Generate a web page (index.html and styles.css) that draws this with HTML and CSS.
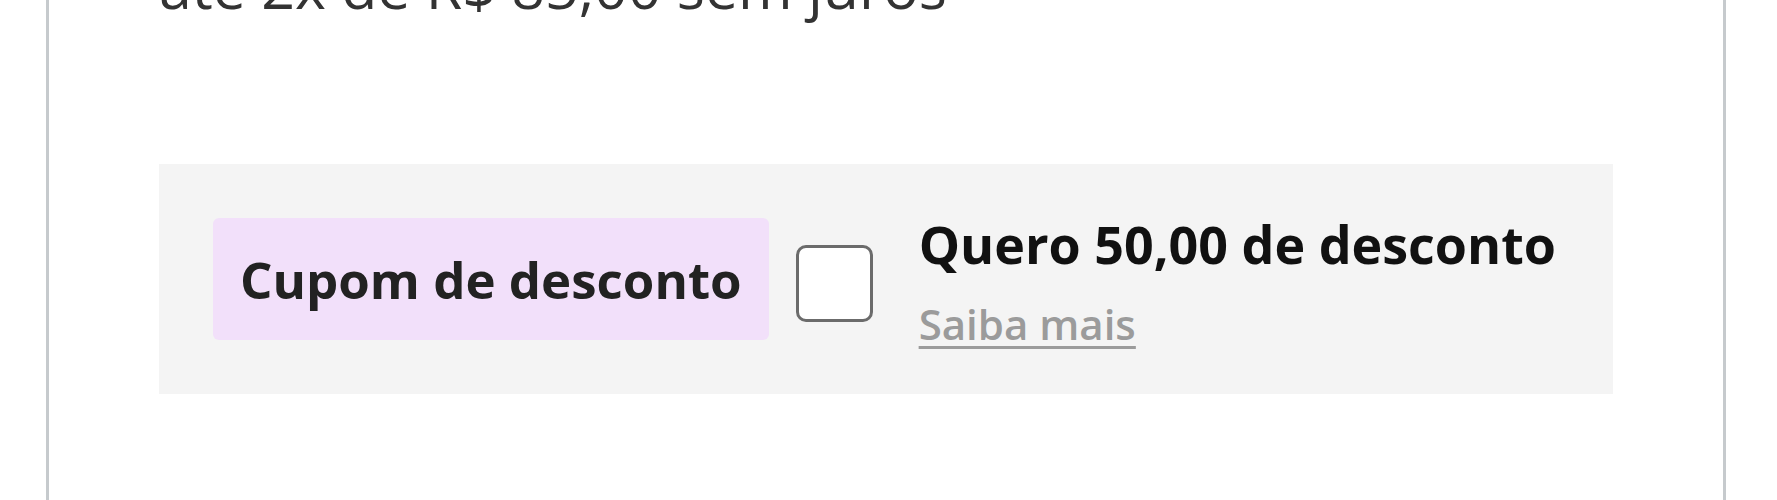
FILE: index.html
```html
<!DOCTYPE html>
<html lang="pt-BR">
<head>
  <meta charset="UTF-8">
  <meta name="viewport" content="width=device-width, initial-scale=1.0">
  <title>Cupom de desconto</title>
  <link rel="stylesheet" href="styles.css">
</head>
<body>
  <div class="card">
    <p class="installments">até 2x de R$ 85,00 sem juros</p>

    <div class="coupon">
      <span class="coupon-tag">Cupom de desconto</span>
      <label class="coupon-check">
        <input type="checkbox" id="coupon">
        <span class="box"></span>
      </label>
      <div class="coupon-text">
        <label for="coupon" class="coupon-title">Quero 50,00 de desconto</label>
        <a href="#" class="coupon-link">Saiba mais</a>
      </div>
    </div>
  </div>
</body>
</html>
```

FILE: styles.css
```css
body {
  font-family: "Open Sans", "Noto Sans", sans-serif;
  margin: 0;
  padding: 0;
  background-color: white;
  color: #111;
}

.card {
  margin: -49px 0 0 46px;
  width: 1680px;
  box-sizing: border-box;
  border-left: 3px solid #c6cacd;
  border-right: 3px solid #c6cacd;
  padding: 0 110px 200px;
}

.installments {
  margin: 0;
  font-size: 59px;
  font-weight: 500;
  line-height: 70px;
  color: #333;
}

.coupon {
  margin-top: 143px;
  background-color: #f4f4f4;
  padding: 54px;
  display: flex;
  align-items: center;
}

.coupon-tag {
  background-color: #f2e0fa;
  border-radius: 6px;
  height: 122px;
  padding: 0 27px;
  display: flex;
  align-items: center;
  font-size: 51px;
  font-weight: bold;
  color: #222;
}

.coupon-check {
  margin: 9px 0 0 27px;
  cursor: pointer;
}

.coupon-check input {
  display: none;
}

.coupon-check .box {
  display: block;
  width: 77px;
  height: 77px;
  box-sizing: border-box;
  border: 3px solid #6b6b6b;
  border-radius: 10px;
  background: white;
}

.coupon-text {
  height: 122px;
  margin-left: 46px;
  display: flex;
  flex-direction: column;
}

.coupon-title {
  font-size: 52px;
  font-weight: bold;
  line-height: 52px;
  color: #111;
}

.coupon-link {
  margin-top: 33px;
  font-size: 42px;
  font-weight: 600;
  line-height: 42px;
  color: #9b9b9b;
  text-decoration: underline;
  text-decoration-thickness: 3px;
  text-underline-offset: 6px;
  align-self: flex-start;
}
```
